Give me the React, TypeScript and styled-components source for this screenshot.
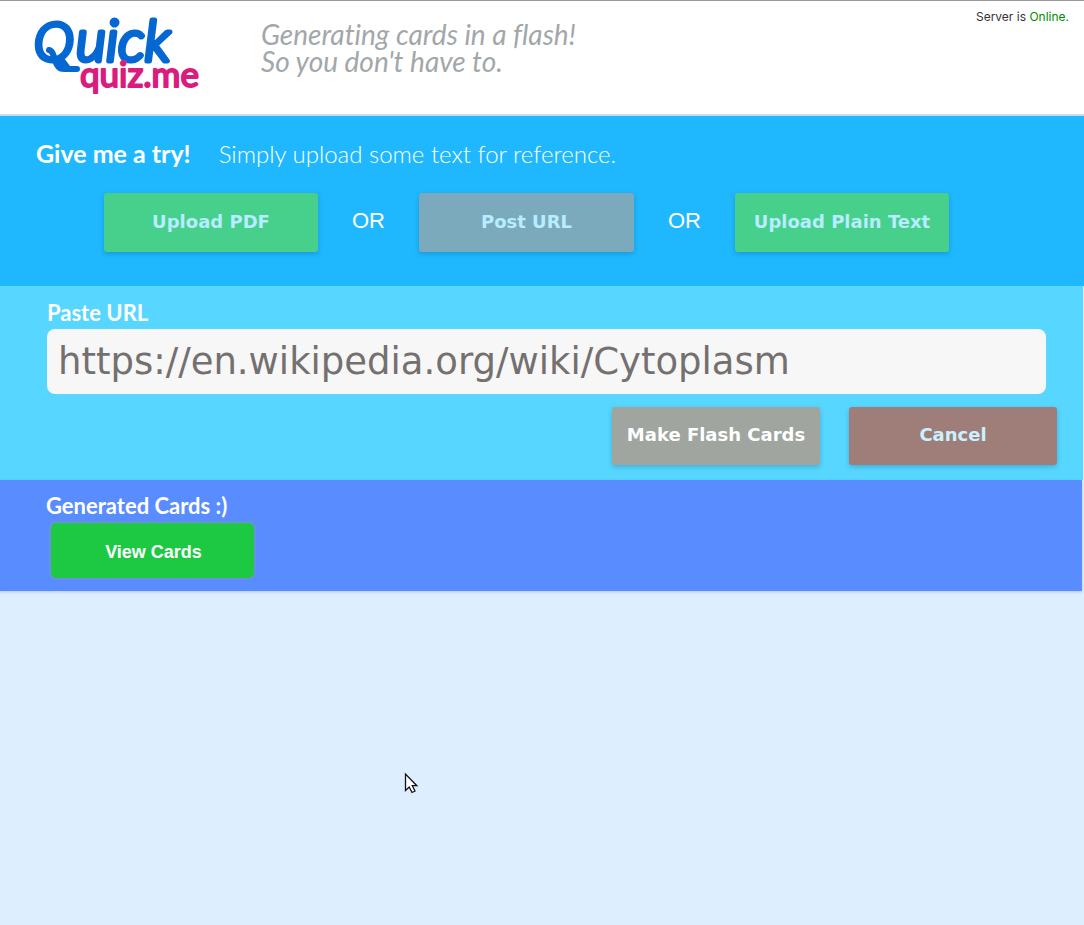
import React from "react";
import styled, { createGlobalStyle } from "styled-components";

const rounded = `Lato, "Open Sans", sans-serif`;
const system = `"DejaVu Sans", Verdana, sans-serif`;
const plain = `"Liberation Sans", Arial, sans-serif`;

const GlobalStyle = createGlobalStyle`
  *, *::before, *::after { box-sizing: border-box; }
  body { margin: 0; background: #dceeff; font-family: ${rounded}; }
`;

const Page = styled.div`
  position: relative;
  min-height: 100vh;
`;

const Header = styled.header`
  display: flex;
  align-items: flex-start;
  min-height: 116px;
  padding: 0 15px 0 30px;
  background: #fff;
  border-top: 1px solid #999;
  border-bottom: 2px solid #c5dff0;
`;

const HomeLink = styled.a`
  display: block;
  width: 231px;
  flex: none;
  svg { display: block; }
`;

const Tagline = styled.p`
  flex: 1;
  margin: 20px 0 0;
  color: #a2a7aa;
  font: italic 400 28px/27px ${rounded};
  font-variant-ligatures: none;
`;

const Status = styled.p`
  margin: 8px 0 0;
  color: #333;
  font: 12px/16px Inter, sans-serif;
`;

const Online = styled.span`
  color: #008a00;
`;

const UploadPanel = styled.section`
  min-height: 170px;
  padding: 21px 36px 34px;
  background: #1fb8ff;
  color: #fff;
`;

const Intro = styled.div`
  display: flex;
  align-items: baseline;
  gap: 28px;
  line-height: 32px;
`;

const IntroTitle = styled.h1`
  margin: 0;
  font-size: 25px;
  font-weight: 700;
`;

const IntroText = styled.p`
  margin: 0;
  font-size: 24px;
  font-weight: 300;
`;

const Choices = styled.div`
  display: flex;
  align-items: center;
  padding: 23px 0 0 68px;
`;

const Or = styled.span`
  width: 101px;
  padding-bottom: 4px;
  text-align: center;
  font: 22px/28px ${plain};
`;

const Button = styled.button<{ $tone: string; $ink: string; $width: number; $height: number }>`
  width: ${(p) => p.$width}px;
  height: ${(p) => p.$height}px;
  padding: 0 0 2px;
  border: 0;
  border-radius: 3px;
  background: ${(p) => p.$tone};
  color: ${(p) => p.$ink};
  box-shadow: 0 2px 5px rgba(0, 60, 110, 0.25);
  font: 700 18px/24px ${system};
  white-space: nowrap;
  cursor: pointer;
`;

const UrlPanel = styled.form`
  min-height: 194px;
  margin: 0 1px 0 0;
  padding: 14px 26px 15px 47px;
  background: #57d7ff;
`;

const Label = styled.label`
  display: block;
  color: #fff;
  font: 700 22px/26px ${rounded};
`;

const UrlInput = styled.input`
  display: block;
  width: calc(100% - 11px);
  height: 65px;
  margin-top: 3px;
  padding: 0 11px 1px;
  border: 0;
  border-radius: 8px;
  background: #f7f7f7;
  color: #757070;
  font: 37px/48px ${system};
`;

const Actions = styled.div`
  display: flex;
  justify-content: flex-end;
  gap: 29px;
  margin-top: 13px;
`;

const CardsPanel = styled.section`
  margin: 0 2px 0 0;
  padding: 13px 46px;
  background: #598cff;
  box-shadow: 0 1px 3px rgba(0, 50, 120, 0.2);
`;

const CardsTitle = styled.h2`
  margin: 0;
  color: #fff;
  font: 700 22px/26px ${rounded};
`;

const ViewButton = styled.button`
  display: block;
  width: 203px;
  height: 55px;
  margin: 4px 0 0 5px;
  padding: 2px 0 0 2px;
  border: 0;
  border-radius: 5px;
  background: #1dc943;
  color: #fff;
  box-shadow: 0 0 2px 1px #7a96c8;
  font: 700 18px/24px ${plain};
  cursor: pointer;
`;

const Pointer = styled.svg`
  position: absolute;
  left: 404px;
  top: 772px;
  pointer-events: none;
`;

function Logo() {
  return (
    <svg width="176" height="100" viewBox="30 0 176 100" role="img" aria-label="Quickquiz.me">
      <g fontFamily="Lato, sans-serif" strokeLinejoin="round" strokeLinecap="round">
        <g fontStyle="italic" fontWeight="300" fill="#0567d2" stroke="#0567d2" strokeWidth="5">
          <text y="60">
            <tspan x="34" fontSize="54">Q</tspan>
            <tspan x="76" fontSize="58">uick</tspan>
          </text>
        </g>
        <path d="M49 49c5 1 5 10 8 15c2 4 4 4 8 4h12" fill="none" stroke="#0567d2" strokeWidth="6" />
        <text x="80" y="86" fontSize="35" fontWeight="400" fill="#d91c7d" stroke="#d91c7d" strokeWidth="2">
          quiz.me
        </text>
      </g>
    </svg>
  );
}

export default function App() {
  return (
    <Page>
      <GlobalStyle />
      <Header>
        <HomeLink href="#">
          <Logo />
        </HomeLink>
        <Tagline>
          Generating cards in a flash!
          <br />
          So you don't have to.
        </Tagline>
        <Status>
          Server is <Online>Online.</Online>
        </Status>
      </Header>
      <main>
        <UploadPanel>
          <Intro>
            <IntroTitle>Give me a try!</IntroTitle>
            <IntroText>Simply upload some text for reference.</IntroText>
          </Intro>
          <Choices>
            <Button type="button" $tone="#46d08b" $ink="#b8ecff" $width={214} $height={59}>Upload PDF</Button>
            <Or>OR</Or>
            <Button type="button" $tone="#7baabc" $ink="#b8ecff" $width={215} $height={59}>Post URL</Button>
            <Or>OR</Or>
            <Button type="button" $tone="#46d08b" $ink="#b8ecff" $width={214} $height={59}>Upload Plain Text</Button>
          </Choices>
        </UploadPanel>
        <UrlPanel onSubmit={(e) => e.preventDefault()}>
          <Label htmlFor="url">Paste URL</Label>
          <UrlInput id="url" type="text" defaultValue="https://en.wikipedia.org/wiki/Cytoplasm" />
          <Actions>
            <Button type="submit" $tone="#a0a59f" $ink="#fff" $width={208} $height={58}>Make Flash Cards</Button>
            <Button type="button" $tone="#9f7d78" $ink="#c9f1ff" $width={208} $height={58}>Cancel</Button>
          </Actions>
        </UrlPanel>
        <CardsPanel>
          <CardsTitle>Generated Cards :)</CardsTitle>
          <ViewButton type="button">View Cards</ViewButton>
        </CardsPanel>
      </main>
      <Pointer width="15" height="24" viewBox="0 0 15 24" aria-hidden="true">
        <path d="M1.500 2v16.500l3.700-3.500 2.800 5.500 3-1.500-2.700-5.300h4.500z" fill="#fff" stroke="#111" strokeWidth="1.300" />
      </Pointer>
    </Page>
  );
}
